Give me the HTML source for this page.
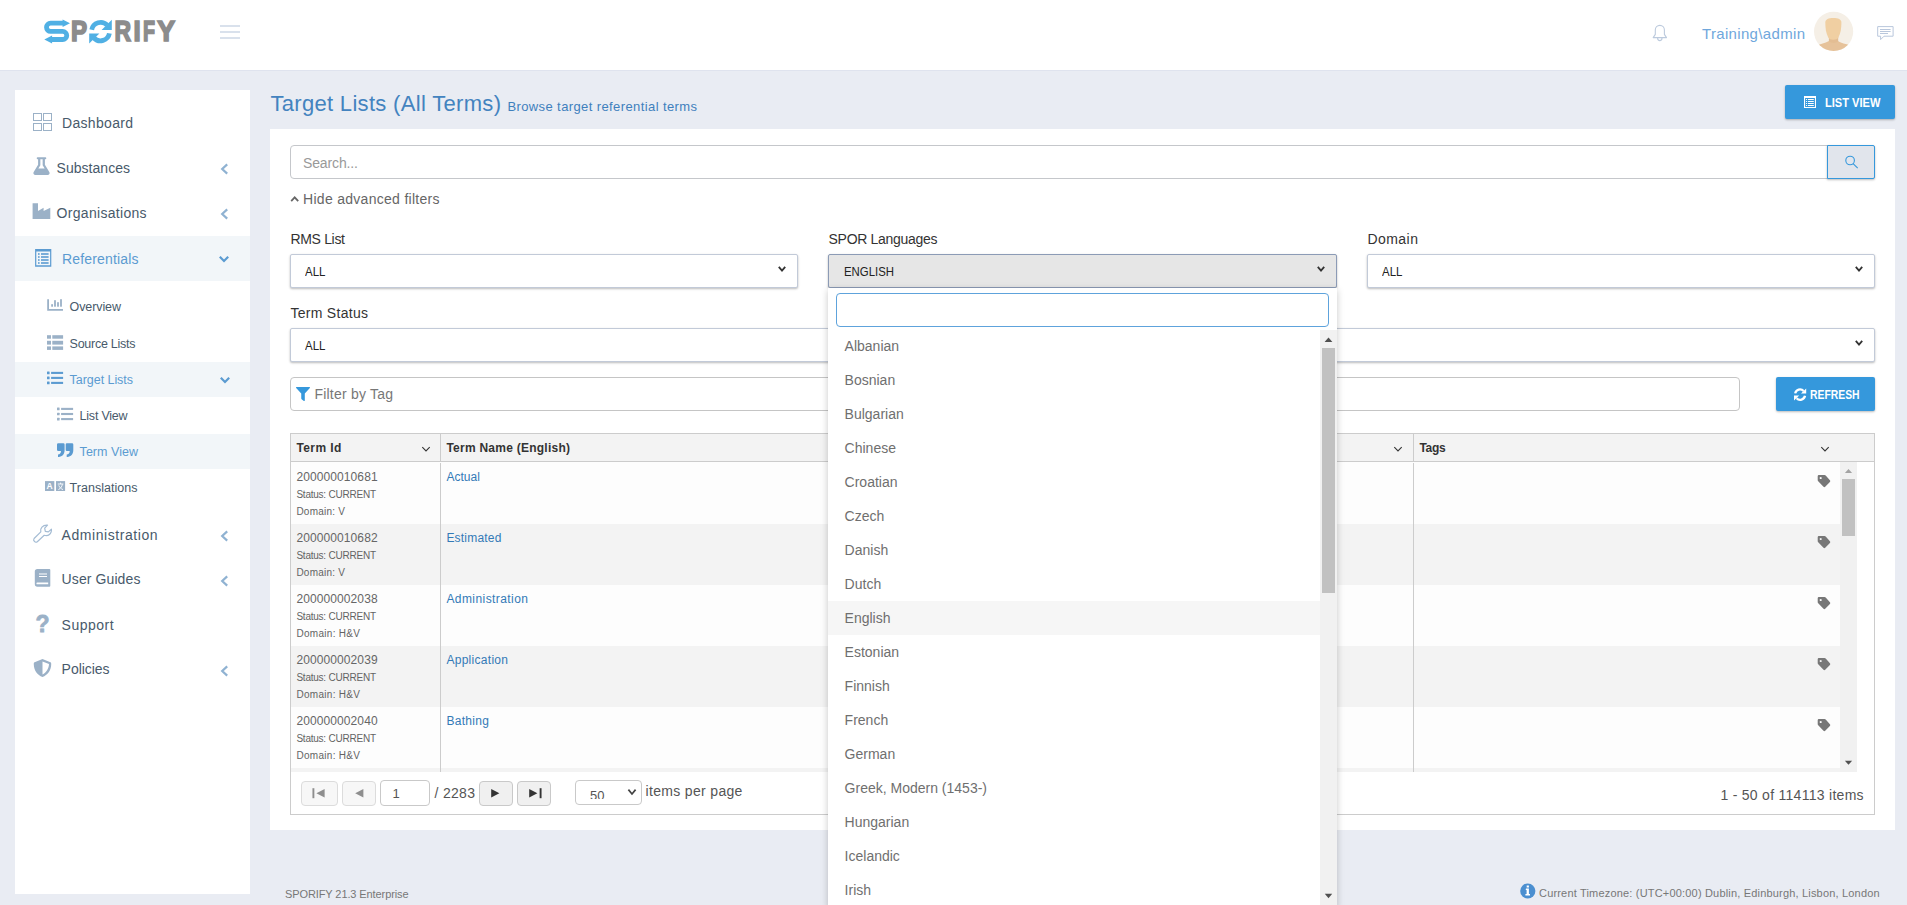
<!DOCTYPE html>
<html lang="en"><head><meta charset="utf-8"><title>SPORIFY - Target Lists (All Terms)</title>
<style>
html,body{margin:0;padding:0}
body{width:1907px;height:905px;overflow:hidden;position:relative;background:#e9ecf3;font-family:"Liberation Sans",sans-serif;}
.t{position:absolute;white-space:pre;line-height:1;font-family:"Liberation Sans",sans-serif;}
div{box-sizing:border-box}
</style></head><body>
<div style="position:absolute;left:0px;top:0px;width:1907px;height:70px;background:#fff;"></div>
<div style="position:absolute;left:0px;top:70px;width:1907px;height:1px;background:#dfe3ee;"></div>
<svg style="position:absolute;left:40px;top:14px;overflow:visible" width="140" height="36" viewBox="40 14 140 36" >
<g fill="none" stroke="#50b0e4" stroke-width="4.8" stroke-linejoin="round">
<path d="M63.2,23.2 H50.6 A4.1,4.1 0 0 0 50.6,31.4 H62.7 A4.05,4.05 0 0 1 62.7,39.5 H51.5"/>
</g>
<path fill="#50b0e4" d="M62.6,19.4 L70,23.2 L62.6,27 Z M52.1,35.6 L44.3,39.5 L52.1,43.6 Z"/>
<g fill="none" stroke="#50b0e4" stroke-width="4.8">
<path d="M91.7,29.8 A9.1,9.1 0 0 1 107.2,25.2"/>
<path d="M109.4,33.4 A9.1,9.1 0 0 1 93.9,38.0"/>
</g>
<path fill="#50b0e4" d="M111.8,19.8 V30 H101.6 Z M89.2,43.6 V33.4 H99.4 Z"/>
</svg>
<svg style="position:absolute;left:40px;top:14px;overflow:visible" width="140" height="36" viewBox="40 14 140 36" ><title>SPORIFY</title><text transform="translate(70.99,41.05) scale(0.8294,1)" font-family="Liberation Sans" font-weight="700" font-size="29.13" fill="#8c8c8c" stroke="#8c8c8c" stroke-width="1.7" stroke-linejoin="miter">P</text><text transform="translate(114.54,41.05) scale(0.7892,1)" font-family="Liberation Sans" font-weight="700" font-size="29.13" fill="#8c8c8c" stroke="#8c8c8c" stroke-width="1.7" stroke-linejoin="miter">R</text><text transform="translate(133.53,41.05) scale(0.8851,1)" font-family="Liberation Sans" font-weight="700" font-size="29.13" fill="#8c8c8c" stroke="#8c8c8c" stroke-width="1.7" stroke-linejoin="miter">I</text><text transform="translate(142.96,41.05) scale(0.6745,1)" font-family="Liberation Sans" font-weight="700" font-size="29.13" fill="#8c8c8c" stroke="#8c8c8c" stroke-width="1.7" stroke-linejoin="miter">F</text><text transform="translate(157.33,41.05) scale(0.9183,1)" font-family="Liberation Sans" font-weight="700" font-size="29.13" fill="#8c8c8c" stroke="#8c8c8c" stroke-width="1.7" stroke-linejoin="miter">Y</text></svg>
<svg style="position:absolute;left:220px;top:24px;overflow:visible" width="20" height="16" viewBox="220 24 20 16" ><path d="M220,26 H240 M220,32 H240 M220,38 H240" stroke="#cdd8e6" stroke-width="1.5" fill="none"/></svg>
<svg style="position:absolute;left:1650px;top:24px;overflow:visible" width="20" height="18" viewBox="1650 24 20 18" ><g fill="none" stroke="#bccadd" stroke-width="1.1" stroke-linejoin="round"><path d="M1653.2,37.6 H1666.5 L1664.4,34.4 V30 a4.55,4.6 0 0 0 -9.1,0 V34.4 Z"/><path d="M1657.6,38 a2.2,2.6 0 0 0 4.4,0"/></g></svg>
<span class="t" style="left:1702px;top:26px;font-size:15px;color:#6fa7dc;letter-spacing:0.333px;">Training\admin</span>
<svg style="position:absolute;left:1814px;top:11px;overflow:visible" width="40" height="41" viewBox="1814 11 40 41" ><defs><clipPath id="avc"><circle cx="1833.6" cy="31.4" r="19.6"/></clipPath></defs>
<circle cx="1833.6" cy="31.4" r="19.6" fill="#f5efe6"/>
<g clip-path="url(#avc)">
<path d="M1813,52 V46.5 C1818,44.6 1825,43.6 1829,41 L1838,41 C1842,43.6 1849,44.6 1854,46.5 V52 Z" fill="#e6c29a"/>
<path d="M1828.9,36.5 V41.6 C1831,43.4 1836,43.4 1838.2,41.6 V36.5 Z" fill="#e3bd93"/>
<path d="M1825.3,22.5 C1825.3,19.2 1828.5,18 1833.3,18 C1838.2,18 1841.4,19.2 1841.4,22.5 C1841.4,28 1840.8,33 1838.4,37.6 C1836.8,40.6 1829.9,40.6 1828.3,37.6 C1825.9,33 1825.3,28 1825.3,22.5 Z" fill="#f0cfa2"/>
</g></svg>
<svg style="position:absolute;left:1877px;top:26px;overflow:visible" width="17" height="14" viewBox="1877 26 17 14" ><g fill="none" stroke="#b9c7dc" stroke-width="1"><path d="M1877.7,26.6 H1893.1 V36.2 H1884 L1880.6,39.6 V36.2 H1877.7 Z"/><path d="M1880,29.5 H1890.6 M1880,31.5 H1890.6 M1880,33.5 H1888"/></g></svg>
<div style="position:absolute;left:15px;top:90px;width:235px;height:804px;background:#fff;"></div>
<div style="position:absolute;left:15px;top:236px;width:235px;height:45px;background:#f2f6f9;"></div>
<div style="position:absolute;left:15px;top:362px;width:235px;height:35px;background:#f2f6f9;"></div>
<div style="position:absolute;left:15px;top:434px;width:235px;height:35px;background:#f2f6f9;"></div>
<svg style="position:absolute;left:33px;top:113px;overflow:visible" width="19" height="18" viewBox="33 113 19 18" ><g fill="none" stroke="#9bb1c7" stroke-width="1"><rect x="33.5" y="113.5" width="8" height="7"/><rect x="43.5" y="113.5" width="8" height="7"/><rect x="33.5" y="123.5" width="8" height="7"/><rect x="43.5" y="123.5" width="8" height="7"/></g></svg>
<span class="t" style="left:62px;top:116px;font-size:14px;color:#485a6b;letter-spacing:0.312px;">Dashboard</span>
<svg style="position:absolute;left:33px;top:157px;overflow:visible" width="17" height="18" viewBox="33 157 17 18" ><path fill-rule="evenodd" fill="#9bb1c7" d="M37.7,157.2 h7.6 a1,1 0 0 1 0,2 h-0.4 v5.6 l4.4,7.2 a2,2 0 0 1 -1.7,3.1 h-12.2 a2,2 0 0 1 -1.7,-3.1 l4.4,-7.2 v-5.6 h-0.4 a1,1 0 0 1 0,-2 z M40.35,159.2 h2.3 v6.1 l2.0,3.2 h-6.3 l2.0,-3.2 z"/></svg>
<span class="t" style="left:56.6px;top:160.6px;font-size:14px;color:#485a6b;letter-spacing:0.025px;">Substances</span>
<svg style="position:absolute;left:32px;top:203px;overflow:visible" width="19" height="16" viewBox="32 203 19 16" ><path fill="#9bb1c7" d="M32.6,203.2 H38 V211 L43.6,207.8 V211 L50.3,207.8 V218.9 H32.6 Z"/></svg>
<span class="t" style="left:56.6px;top:205.6px;font-size:14px;color:#485a6b;letter-spacing:0.301px;">Organisations</span>
<svg style="position:absolute;left:35px;top:249px;overflow:visible" width="17" height="18" viewBox="35 249 17 18" ><path fill-rule="evenodd" fill="#5b9bd1" d="M35.1,249.1 H51.3 V266.8 H35.1 Z M36.3,251.6 V265.2 H50.1 V251.6 Z"/><rect x="38" y="253.2" width="1.6" height="1.6" fill="#5b9bd1"/><rect x="41" y="253.2" width="7.6" height="1.6" fill="#5b9bd1"/><rect x="38" y="256.2" width="1.6" height="1.6" fill="#5b9bd1"/><rect x="41" y="256.2" width="7.6" height="1.6" fill="#5b9bd1"/><rect x="38" y="259.2" width="1.6" height="1.6" fill="#5b9bd1"/><rect x="41" y="259.2" width="7.6" height="1.6" fill="#5b9bd1"/><rect x="38" y="262.2" width="1.6" height="1.6" fill="#5b9bd1"/><rect x="41" y="262.2" width="7.6" height="1.6" fill="#5b9bd1"/></svg>
<span class="t" style="left:62px;top:251.6px;font-size:14px;color:#5b9bd1;letter-spacing:0.154px;">Referentials</span>
<svg style="position:absolute;left:220px;top:163px;overflow:visible" width="9" height="12" viewBox="220 163 9 12" ><path d="M227.2,164.4 L222.2,169 L227.2,173.6" fill="none" stroke="#8fb2d2" stroke-width="2.2"/></svg>
<svg style="position:absolute;left:220px;top:208px;overflow:visible" width="9" height="12" viewBox="220 208 9 12" ><path d="M227.2,209.4 L222.2,214 L227.2,218.6" fill="none" stroke="#8fb2d2" stroke-width="2.2"/></svg>
<svg style="position:absolute;left:220px;top:530px;overflow:visible" width="9" height="12" viewBox="220 530 9 12" ><path d="M227.2,531.4 L222.2,536 L227.2,540.6" fill="none" stroke="#8fb2d2" stroke-width="2.2"/></svg>
<svg style="position:absolute;left:220px;top:575px;overflow:visible" width="9" height="12" viewBox="220 575 9 12" ><path d="M227.2,576.4 L222.2,581 L227.2,585.6" fill="none" stroke="#8fb2d2" stroke-width="2.2"/></svg>
<svg style="position:absolute;left:220px;top:665px;overflow:visible" width="9" height="12" viewBox="220 665 9 12" ><path d="M227.2,666.4 L222.2,671 L227.2,675.6" fill="none" stroke="#8fb2d2" stroke-width="2.2"/></svg>
<svg style="position:absolute;left:218px;top:255px;overflow:visible" width="12" height="8" viewBox="218 255 12 8" ><path d="M219.8,256.8 L224,261 L228.2,256.8" fill="none" stroke="#5b9bd1" stroke-width="2.2"/></svg>
<svg style="position:absolute;left:219px;top:376px;overflow:visible" width="12" height="8" viewBox="219 376 12 8" ><path d="M220.8,377.8 L225,382 L229.2,377.8" fill="none" stroke="#5b9bd1" stroke-width="2.2"/></svg>
<svg style="position:absolute;left:47px;top:299px;overflow:visible" width="16" height="12" viewBox="47 299 16 12" ><path fill="#9bb1c7" d="M47.2,299.2 h1.8 v9.9 h14 v1.6 h-15.8 Z"/><rect x="51.2" y="304.2" width="1.8" height="2.5" fill="#9bb1c7"/><rect x="54.1" y="300.2" width="1.8" height="6.5" fill="#9bb1c7"/><rect x="57.1" y="302.2" width="1.8" height="4.5" fill="#9bb1c7"/><rect x="60.1" y="299.2" width="1.8" height="7.5" fill="#9bb1c7"/></svg>
<span class="t" style="left:69.6px;top:300.6px;font-size:12.5px;color:#485a6b;letter-spacing:-0.099px;">Overview</span>
<svg style="position:absolute;left:47px;top:335px;overflow:visible" width="17" height="15" viewBox="47 335 17 15" ><rect x="47" y="335.2" width="4" height="3.5" fill="#9bb1c7"/><rect x="52.3" y="335.2" width="10.8" height="3.5" fill="#9bb1c7"/><rect x="47" y="340.8" width="4" height="3.8" fill="#9bb1c7"/><rect x="52.3" y="340.8" width="10.8" height="3.8" fill="#9bb1c7"/><rect x="47" y="346.4" width="4" height="3.5" fill="#9bb1c7"/><rect x="52.3" y="346.4" width="10.8" height="3.5" fill="#9bb1c7"/></svg>
<span class="t" style="left:69.6px;top:338px;font-size:12.5px;color:#485a6b;letter-spacing:-0.271px;">Source Lists</span>
<svg style="position:absolute;left:47px;top:371px;overflow:visible" width="17" height="14" viewBox="47 371 17 14" ><rect x="47" y="371.59999999999997" width="2.6" height="2.6" rx="0.5" fill="#5b9bd1"/><rect x="51.1" y="371.84999999999997" width="12" height="2.1" fill="#5b9bd1"/><rect x="47" y="376.59999999999997" width="2.6" height="2.6" rx="0.5" fill="#5b9bd1"/><rect x="51.1" y="376.84999999999997" width="12" height="2.1" fill="#5b9bd1"/><rect x="47" y="381.59999999999997" width="2.6" height="2.6" rx="0.5" fill="#5b9bd1"/><rect x="51.1" y="381.84999999999997" width="12" height="2.1" fill="#5b9bd1"/></svg>
<span class="t" style="left:69.6px;top:374px;font-size:12.5px;color:#5b9bd1;letter-spacing:-0.047px;">Target Lists</span>
<svg style="position:absolute;left:57px;top:407px;overflow:visible" width="17" height="14" viewBox="57 407 17 14" ><rect x="57" y="407.59999999999997" width="2.6" height="2.6" rx="0.5" fill="#9bb1c7"/><rect x="61.1" y="407.84999999999997" width="12" height="2.1" fill="#9bb1c7"/><rect x="57" y="412.7" width="2.6" height="2.6" rx="0.5" fill="#9bb1c7"/><rect x="61.1" y="412.95" width="12" height="2.1" fill="#9bb1c7"/><rect x="57" y="417.8" width="2.6" height="2.6" rx="0.5" fill="#9bb1c7"/><rect x="61.1" y="418.05" width="12" height="2.1" fill="#9bb1c7"/></svg>
<span class="t" style="left:79.6px;top:410px;font-size:12.5px;color:#485a6b;letter-spacing:-0.225px;">List View</span>
<svg style="position:absolute;left:57px;top:443px;overflow:visible" width="17" height="14" viewBox="57 443 17 14" ><path fill="#5b9bd1" d="M58.2,443.2 h5.2 a1.2,1.2 0 0 1 1.2,1.2 v5.6 c0,4.2 -2.2,6.6 -6,7 h-0.6 v-2.4 c1.8,-0.2 3,-1.4 3,-3.6 h-2.8 a1.2,1.2 0 0 1 -1.2,-1.2 v-5.4 a1.2,1.2 0 0 1 1.2,-1.2 z"/><path fill="#5b9bd1" d="M66.9,443.2 h5.2 a1.2,1.2 0 0 1 1.2,1.2 v5.6 c0,4.2 -2.2,6.6 -6,7 h-0.6 v-2.4 c1.8,-0.2 3,-1.4 3,-3.6 h-2.8 a1.2,1.2 0 0 1 -1.2,-1.2 v-5.4 a1.2,1.2 0 0 1 1.2,-1.2 z"/></svg>
<span class="t" style="left:79.6px;top:445.6px;font-size:12.5px;color:#5b9bd1;letter-spacing:0.034px;">Term View</span>
<svg style="position:absolute;left:45px;top:481px;overflow:visible" width="21" height="10" viewBox="45 481 21 10" ><rect x="45" y="481.1" width="9.3" height="9.9" fill="#9bb1c7"/><rect x="56" y="481.1" width="9.1" height="9.9" fill="#9bb1c7"/><text x="49.65" y="489.3" text-anchor="middle" font-family="Liberation Sans" font-weight="700" font-size="8.5" fill="#fff">A</text><path d="M57.8,484 h5.6 M60.6,482.6 v1.4 M58.4,489.6 C60.6,488.6 62,486.6 62.4,484.2 M58.8,485.4 C59.6,487.4 61,488.8 63,489.6" fill="none" stroke="#fff" stroke-width="0.9"/></svg>
<span class="t" style="left:69.6px;top:482px;font-size:12.5px;color:#485a6b;letter-spacing:0.034px;">Translations</span>
<svg style="position:absolute;left:33px;top:524px;overflow:visible" width="20" height="20" viewBox="33 524 20 20" ><path d="M37.3,541.7 a2.3,2.3 0 0 1 -3.2,-3.2 L40.8,531.8 C39.8,528.4 42.6,524.8 47.5,525.2 L44.7,528.2 L45.3,531.3 L48.4,531.9 L51.4,529.1 C51.9,533.8 48.2,536.6 44.2,535.3 Z" fill="none" stroke="#a4bcd4" stroke-width="1.2" stroke-linejoin="round"/></svg>
<span class="t" style="left:61.6px;top:527.6px;font-size:14px;color:#485a6b;letter-spacing:0.561px;">Administration</span>
<svg style="position:absolute;left:34px;top:569px;overflow:visible" width="17" height="18" viewBox="34 569 17 18" ><path fill-rule="evenodd" fill="#9bb1c7" d="M37.4,569 H49.4 a0.9,0.9 0 0 1 0.9,0.9 V585.8 a0.9,0.9 0 0 1 -0.9,0.9 H37.4 a2.6,2.6 0 0 1 -2.6,-2.6 V571.6 a2.6,2.6 0 0 1 2.6,-2.6 z M39,573.6 v1 h8 v-1 z M39,576 v1 h8 v-1 z M37.3,582.5 a0.9,0.9 0 0 0 0,1.8 h10.9 v-1.8 z"/></svg>
<span class="t" style="left:61.6px;top:572.4px;font-size:14px;color:#485a6b;letter-spacing:0.099px;">User Guides</span>
<span class="t" style="left:35.4px;top:612.6px;font-size:23px;color:#9bb1c7;font-weight:700;-webkit-text-stroke:0.8px #9bb1c7;">?</span>
<span class="t" style="left:61.6px;top:617.6px;font-size:14px;color:#485a6b;letter-spacing:0.492px;">Support</span>
<svg style="position:absolute;left:33px;top:659px;overflow:visible" width="19" height="19" viewBox="33 659 19 19" ><path fill-rule="evenodd" fill="#9bb1c7" d="M42.5,659 L50.4,662.2 C51.3,662.6 51.2,663.4 51.2,664.4 C51.2,670 47.6,675 42.5,677.1 C37.4,675 33.8,670 33.8,664.4 C33.8,663.4 33.7,662.6 34.6,662.2 Z M42.5,661.4 V674.6 C46.2,672.7 48.9,668.6 49,664.1 Z"/></svg>
<span class="t" style="left:61.6px;top:662.4px;font-size:14px;color:#485a6b;letter-spacing:-0.036px;">Policies</span>
<span class="t" style="left:270.4px;top:93px;font-size:22px;color:#4383bf;letter-spacing:0.317px;">Target Lists (All Terms)</span>
<span class="t" style="left:507.4px;top:100px;font-size:13px;color:#3f80bd;letter-spacing:0.396px;">Browse target referential terms</span>
<div style="position:absolute;left:1785px;top:85px;width:110px;height:34px;background:#3598dc;border-radius:2px;box-shadow:0 1px 3px rgba(0,0,0,.1),0 1px 2px rgba(0,0,0,.18);"></div>
<svg style="position:absolute;left:1804px;top:96px;overflow:visible" width="12" height="12" viewBox="1804 96 12 12" ><path fill-rule="evenodd" fill="#fff" d="M1804,96 H1816 V108 H1804 Z M1805.1,98 V106.9 H1814.9 V98 Z"/><rect x="1806" y="99.0" width="1.1" height="1" fill="#fff"/><rect x="1808" y="99.0" width="5.8" height="1" fill="#fff"/><rect x="1806" y="101.0" width="1.1" height="1" fill="#fff"/><rect x="1808" y="101.0" width="5.8" height="1" fill="#fff"/><rect x="1806" y="103.0" width="1.1" height="1" fill="#fff"/><rect x="1808" y="103.0" width="5.8" height="1" fill="#fff"/><rect x="1806" y="105.0" width="1.1" height="1" fill="#fff"/><rect x="1808" y="105.0" width="5.8" height="1" fill="#fff"/></svg>
<span class="t" style="left:1824.6px;top:96.2px;font-size:13px;color:#fff;font-weight:700;transform:scaleX(0.8523);transform-origin:0 0;">LIST VIEW</span>
<div style="position:absolute;left:270px;top:129px;width:1625px;height:701px;background:#fff;"></div>
<div style="position:absolute;left:290px;top:145px;width:1538px;height:34px;background:#fff;border:1px solid #c5c7cb;border-radius:4px 0 0 4px;"></div>
<span class="t" style="left:303px;top:156px;font-size:14px;color:#999;letter-spacing:-0.129px;">Search...</span>
<div style="position:absolute;left:1827px;top:145px;width:48px;height:34px;background:#e1e5ec;border:1px solid #3598dc;border-radius:0 2px 2px 0;box-shadow:0 1px 3px rgba(0,0,0,.1),0 1px 2px rgba(0,0,0,.18);"></div>
<svg style="position:absolute;left:1845px;top:156px;overflow:visible" width="14" height="13" viewBox="1845 156 14 13" ><g fill="none" stroke="#3598dc" stroke-width="1.1"><circle cx="1850.1" cy="160.5" r="4.3"/><path d="M1853.1,163.7 L1857.7,168.2"/></g></svg>
<svg style="position:absolute;left:290px;top:195px;overflow:visible" width="10" height="8" viewBox="290 195 10 8" ><path d="M291.2,201.2 L294.7,197.4 L298.2,201.2" fill="none" stroke="#666" stroke-width="1.8"/></svg>
<span class="t" style="left:303px;top:192px;font-size:14px;color:#666;letter-spacing:0.292px;">Hide advanced filters</span>
<span class="t" style="left:290.4px;top:232px;font-size:14px;color:#333;letter-spacing:-0.314px;">RMS List</span>
<span class="t" style="left:828.6px;top:232px;font-size:14px;color:#333;letter-spacing:-0.312px;">SPOR Languages</span>
<span class="t" style="left:1367.4px;top:232px;font-size:14px;color:#333;letter-spacing:0.470px;">Domain</span>
<span class="t" style="left:290.4px;top:306px;font-size:14px;color:#333;letter-spacing:0.290px;">Term Status</span>
<div style="position:absolute;left:290px;top:254px;width:508px;height:34px;background:#fff;border:1px solid #c2cad8;border-radius:2px;box-shadow:0 1px 3px rgba(0,0,0,.1),0 1px 2px rgba(0,0,0,.18);"></div>
<svg style="position:absolute;left:777.2px;top:265.4px;overflow:visible" width="10" height="8" viewBox="777.2 265.4 10 8" ><path d="M779.0,267.29999999999995 L782.2,271.1 L785.4000000000001,267.29999999999995" fill="none" stroke="#333" stroke-width="1.8"/></svg>
<div style="position:absolute;left:828px;top:254px;width:509px;height:34px;background:#e6e6e6;border:1px solid #8c9bb6;border-radius:2px;box-shadow:0 1px 3px rgba(0,0,0,.1),0 1px 2px rgba(0,0,0,.18);"></div>
<svg style="position:absolute;left:1316.2px;top:265.4px;overflow:visible" width="10" height="8" viewBox="1316.2 265.4 10 8" ><path d="M1318.0,267.29999999999995 L1321.2,271.1 L1324.4,267.29999999999995" fill="none" stroke="#333" stroke-width="1.8"/></svg>
<div style="position:absolute;left:1367px;top:254px;width:508px;height:34px;background:#fff;border:1px solid #c2cad8;border-radius:2px;box-shadow:0 1px 3px rgba(0,0,0,.1),0 1px 2px rgba(0,0,0,.18);"></div>
<svg style="position:absolute;left:1854.2px;top:265.4px;overflow:visible" width="10" height="8" viewBox="1854.2 265.4 10 8" ><path d="M1856.0,267.29999999999995 L1859.2,271.1 L1862.4,267.29999999999995" fill="none" stroke="#333" stroke-width="1.8"/></svg>
<div style="position:absolute;left:290px;top:328px;width:1585px;height:34px;background:#fff;border:1px solid #c2cad8;border-radius:2px;box-shadow:0 1px 3px rgba(0,0,0,.1),0 1px 2px rgba(0,0,0,.18);"></div>
<svg style="position:absolute;left:1854.2px;top:339.4px;overflow:visible" width="10" height="8" viewBox="1854.2 339.4 10 8" ><path d="M1856.0,341.29999999999995 L1859.2,345.1 L1862.4,341.29999999999995" fill="none" stroke="#333" stroke-width="1.8"/></svg>
<span class="t" style="left:305px;top:265px;font-size:13px;color:#222;transform:scaleX(0.8816);transform-origin:0 0;">ALL</span>
<span class="t" style="left:843.6px;top:265px;font-size:13px;color:#222;transform:scaleX(0.8760);transform-origin:0 0;">ENGLISH</span>
<span class="t" style="left:1381.6px;top:265px;font-size:13px;color:#222;transform:scaleX(0.8816);transform-origin:0 0;">ALL</span>
<span class="t" style="left:305px;top:339px;font-size:13px;color:#222;transform:scaleX(0.8816);transform-origin:0 0;">ALL</span>
<div style="position:absolute;left:290px;top:377px;width:1450px;height:34px;background:#fff;border:1px solid #c5c5c5;border-radius:4px;"></div>
<svg style="position:absolute;left:296px;top:387px;overflow:visible" width="14" height="14" viewBox="296 387 14 14" ><path fill="#3598dc" d="M296.6,387 H309.4 a0.6,0.6 0 0 1 0.45,1 L304.8,393.6 V400.4 a0.6,0.6 0 0 1 -0.95,0.5 L301.6,399.2 a0.8,0.8 0 0 1 -0.35,-0.65 V393.6 L296.15,388 a0.6,0.6 0 0 1 0.45,-1 z"/></svg>
<span class="t" style="left:314.4px;top:387px;font-size:14px;color:#777;letter-spacing:0.217px;">Filter by Tag</span>
<div style="position:absolute;left:1776px;top:377px;width:99px;height:34px;background:#3598dc;border-radius:2px;box-shadow:0 1px 3px rgba(0,0,0,.1),0 1px 2px rgba(0,0,0,.18);"></div>
<svg style="position:absolute;left:1794px;top:388px;overflow:visible" width="13" height="13" viewBox="1794 388 13 13" ><g fill="none" stroke="#fff" stroke-width="2.3"><path d="M1795.2,393.4 A4.9,4.9 0 0 1 1803.6,391"/><path d="M1805,395.8 A4.9,4.9 0 0 1 1796.6,398.2"/></g>
<path fill="#fff" d="M1806.2,388.4 V393.6 H1801 Z M1794,400.6 V395.6 H1799.2 Z"/></svg>
<span class="t" style="left:1809.8px;top:389.2px;font-size:12.5px;color:#fff;font-weight:700;transform:scaleX(0.8303);transform-origin:0 0;">REFRESH</span>
<div style="position:absolute;left:290px;top:433px;width:1585px;height:382px;background:#fff;border:1px solid #ccc;"></div>
<div style="position:absolute;left:291px;top:434px;width:1583px;height:27px;background:#f3f3f3;"></div>
<div style="position:absolute;left:291px;top:461px;width:1583px;height:1px;background:#ccc;"></div>
<div style="position:absolute;left:440px;top:434px;width:1px;height:28px;background:#ccc;"></div>
<div style="position:absolute;left:1413px;top:434px;width:1px;height:28px;background:#ccc;"></div>
<span class="t" style="left:296.4px;top:442px;font-size:12px;color:#333;font-weight:700;letter-spacing:0.424px;">Term Id</span>
<span class="t" style="left:446.4px;top:442px;font-size:12px;color:#333;font-weight:700;letter-spacing:0.248px;">Term Name (English)</span>
<span class="t" style="left:1419.4px;top:442px;font-size:12px;color:#333;font-weight:700;letter-spacing:-0.308px;">Tags</span>
<svg style="position:absolute;left:420.5px;top:444.6px;overflow:visible" width="10" height="8" viewBox="420.5 444.6 10 8" ><path d="M421.8,446.70000000000005 L425.5,450.5 L429.2,446.70000000000005" fill="none" stroke="#333" stroke-width="1.1"/></svg>
<svg style="position:absolute;left:1393.4px;top:444.6px;overflow:visible" width="10" height="8" viewBox="1393.4 444.6 10 8" ><path d="M1394.7,446.70000000000005 L1398.4,450.5 L1402.1000000000001,446.70000000000005" fill="none" stroke="#333" stroke-width="1.1"/></svg>
<svg style="position:absolute;left:1820.4px;top:444.6px;overflow:visible" width="10" height="8" viewBox="1820.4 444.6 10 8" ><path d="M1821.7,446.70000000000005 L1825.4,450.5 L1829.1000000000001,446.70000000000005" fill="none" stroke="#333" stroke-width="1.1"/></svg>
<div style="position:absolute;left:291px;top:462px;width:1549px;height:62px;background:#fdfdfd;"></div>
<span class="t" style="left:296.4px;top:471px;font-size:12px;color:#666;letter-spacing:0.101px;">200000010681</span>
<span class="t" style="left:296.4px;top:490px;font-size:10px;color:#636363;letter-spacing:-0.228px;">Status: CURRENT</span>
<span class="t" style="left:296.4px;top:507px;font-size:10px;color:#636363;letter-spacing:0.239px;">Domain: V</span>
<span class="t" style="left:446.4px;top:471px;font-size:12px;color:#337ab7;letter-spacing:0.048px;">Actual</span>
<svg style="position:absolute;left:1817px;top:475px;overflow:visible" width="14" height="13" viewBox="1817 475 14 13" ><path fill-rule="evenodd" fill="#777" d="M1818.9,475 H1824.6 a1.6,1.6 0 0 1 1.1,0.45 L1829.9,480.2 a1.2,1.2 0 0 1 0,1.7 L1825.2,486.7 a1.2,1.2 0 0 1 -1.7,0 L1818.2,481.3 a1.6,1.6 0 0 1 -0.5,-1.1 V476.2 a1.2,1.2 0 0 1 1.2,-1.2 z M1820.7,476.9 a1.1,1.1 0 1 0 0.01,0 z"/></svg>
<div style="position:absolute;left:291px;top:524px;width:1549px;height:61px;background:#f3f3f3;"></div>
<span class="t" style="left:296.4px;top:532px;font-size:12px;color:#666;letter-spacing:0.101px;">200000010682</span>
<span class="t" style="left:296.4px;top:551px;font-size:10px;color:#636363;letter-spacing:-0.228px;">Status: CURRENT</span>
<span class="t" style="left:296.4px;top:568px;font-size:10px;color:#636363;letter-spacing:0.239px;">Domain: V</span>
<span class="t" style="left:446.4px;top:532px;font-size:12px;color:#337ab7;letter-spacing:0.205px;">Estimated</span>
<svg style="position:absolute;left:1817px;top:536px;overflow:visible" width="14" height="13" viewBox="1817 536 14 13" ><path fill-rule="evenodd" fill="#777" d="M1818.9,536 H1824.6 a1.6,1.6 0 0 1 1.1,0.45 L1829.9,541.2 a1.2,1.2 0 0 1 0,1.7 L1825.2,547.7 a1.2,1.2 0 0 1 -1.7,0 L1818.2,542.3 a1.6,1.6 0 0 1 -0.5,-1.1 V537.2 a1.2,1.2 0 0 1 1.2,-1.2 z M1820.7,537.9 a1.1,1.1 0 1 0 0.01,0 z"/></svg>
<div style="position:absolute;left:291px;top:585px;width:1549px;height:61px;background:#fdfdfd;"></div>
<span class="t" style="left:296.4px;top:593px;font-size:12px;color:#666;letter-spacing:0.101px;">200000002038</span>
<span class="t" style="left:296.4px;top:612px;font-size:10px;color:#636363;letter-spacing:-0.228px;">Status: CURRENT</span>
<span class="t" style="left:296.4px;top:629px;font-size:10px;color:#636363;letter-spacing:0.302px;">Domain: H&amp;V</span>
<span class="t" style="left:446.4px;top:593px;font-size:12px;color:#337ab7;letter-spacing:0.428px;">Administration</span>
<svg style="position:absolute;left:1817px;top:597px;overflow:visible" width="14" height="13" viewBox="1817 597 14 13" ><path fill-rule="evenodd" fill="#777" d="M1818.9,597 H1824.6 a1.6,1.6 0 0 1 1.1,0.45 L1829.9,602.2 a1.2,1.2 0 0 1 0,1.7 L1825.2,608.7 a1.2,1.2 0 0 1 -1.7,0 L1818.2,603.3 a1.6,1.6 0 0 1 -0.5,-1.1 V598.2 a1.2,1.2 0 0 1 1.2,-1.2 z M1820.7,598.9 a1.1,1.1 0 1 0 0.01,0 z"/></svg>
<div style="position:absolute;left:291px;top:646px;width:1549px;height:61px;background:#f3f3f3;"></div>
<span class="t" style="left:296.4px;top:654px;font-size:12px;color:#666;letter-spacing:0.101px;">200000002039</span>
<span class="t" style="left:296.4px;top:673px;font-size:10px;color:#636363;letter-spacing:-0.228px;">Status: CURRENT</span>
<span class="t" style="left:296.4px;top:690px;font-size:10px;color:#636363;letter-spacing:0.302px;">Domain: H&amp;V</span>
<span class="t" style="left:446.4px;top:654px;font-size:12px;color:#337ab7;letter-spacing:0.288px;">Application</span>
<svg style="position:absolute;left:1817px;top:658px;overflow:visible" width="14" height="13" viewBox="1817 658 14 13" ><path fill-rule="evenodd" fill="#777" d="M1818.9,658 H1824.6 a1.6,1.6 0 0 1 1.1,0.45 L1829.9,663.2 a1.2,1.2 0 0 1 0,1.7 L1825.2,669.7 a1.2,1.2 0 0 1 -1.7,0 L1818.2,664.3 a1.6,1.6 0 0 1 -0.5,-1.1 V659.2 a1.2,1.2 0 0 1 1.2,-1.2 z M1820.7,659.9 a1.1,1.1 0 1 0 0.01,0 z"/></svg>
<div style="position:absolute;left:291px;top:707px;width:1549px;height:61px;background:#fdfdfd;"></div>
<span class="t" style="left:296.4px;top:715px;font-size:12px;color:#666;letter-spacing:0.101px;">200000002040</span>
<span class="t" style="left:296.4px;top:734px;font-size:10px;color:#636363;letter-spacing:-0.228px;">Status: CURRENT</span>
<span class="t" style="left:296.4px;top:751px;font-size:10px;color:#636363;letter-spacing:0.302px;">Domain: H&amp;V</span>
<span class="t" style="left:446.4px;top:715px;font-size:12px;color:#337ab7;letter-spacing:0.316px;">Bathing</span>
<svg style="position:absolute;left:1817px;top:719px;overflow:visible" width="14" height="13" viewBox="1817 719 14 13" ><path fill-rule="evenodd" fill="#777" d="M1818.9,719 H1824.6 a1.6,1.6 0 0 1 1.1,0.45 L1829.9,724.2 a1.2,1.2 0 0 1 0,1.7 L1825.2,730.7 a1.2,1.2 0 0 1 -1.7,0 L1818.2,725.3 a1.6,1.6 0 0 1 -0.5,-1.1 V720.2 a1.2,1.2 0 0 1 1.2,-1.2 z M1820.7,720.9 a1.1,1.1 0 1 0 0.01,0 z"/></svg>
<div style="position:absolute;left:291px;top:768px;width:1549px;height:4px;background:#f3f3f3;"></div>
<div style="position:absolute;left:440px;top:463px;width:1px;height:309px;background:#ccc;"></div>
<div style="position:absolute;left:1413px;top:463px;width:1px;height:309px;background:#ccc;"></div>
<div style="position:absolute;left:1840px;top:462px;width:17px;height:310px;background:#f1f1f1;"></div>
<div style="position:absolute;left:1842px;top:479px;width:13px;height:57px;background:#c1c1c1;"></div>
<svg style="position:absolute;left:1844px;top:468px;overflow:visible" width="9" height="5" viewBox="1844 468 9 5" ><path d="M1844.9,472.9 L1848.5,468.9 L1852.1,472.9 Z" fill="#a3a3a3"/></svg>
<svg style="position:absolute;left:1844px;top:760px;overflow:visible" width="9" height="5" viewBox="1844 760 9 5" ><path d="M1844.9,760.8 L1848.5,764.8 L1852.1,760.8 Z" fill="#505050"/></svg>
<div style="position:absolute;left:301px;top:781px;width:37px;height:25px;background:#f7f7f7;border:1px solid #dcdcdc;border-radius:4px;"></div>
<div style="position:absolute;left:342px;top:781px;width:34px;height:25px;background:#f7f7f7;border:1px solid #dcdcdc;border-radius:4px;"></div>
<div style="position:absolute;left:479px;top:781px;width:34px;height:25px;background:#f0f0f0;border:1px solid #c9c9c9;border-radius:4px;"></div>
<div style="position:absolute;left:517px;top:781px;width:34px;height:25px;background:#f0f0f0;border:1px solid #c9c9c9;border-radius:4px;"></div>
<svg style="position:absolute;left:312px;top:788px;overflow:visible" width="14" height="11" viewBox="312 788 14 11" ><path d="M313.4,788.2 V798.2" stroke="#8e8e8e" stroke-width="1.9" fill="none"/><path d="M324.6,788.9 V797.5 L316.4,793.2 Z" fill="#8e8e8e"/></svg>
<svg style="position:absolute;left:354px;top:788px;overflow:visible" width="10" height="11" viewBox="354 788 10 11" ><path d="M363.4,788.9 V797.5 L355.2,793.2 Z" fill="#8e8e8e"/></svg>
<svg style="position:absolute;left:490px;top:788px;overflow:visible" width="10" height="11" viewBox="490 788 10 11" ><path d="M491.2,788.9 V797.5 L499.4,793.2 Z" fill="#333"/></svg>
<svg style="position:absolute;left:528px;top:788px;overflow:visible" width="14" height="11" viewBox="528 788 14 11" ><path d="M529.2,788.9 V797.5 L537.4,793.2 Z" fill="#333"/><path d="M540.6,788.2 V798.2" stroke="#333" stroke-width="1.9" fill="none"/></svg>
<div style="position:absolute;left:380px;top:780px;width:50px;height:26px;background:#fff;border:1px solid #c9c9c9;border-radius:4px;"></div>
<span class="t" style="left:392.4px;top:787px;font-size:13px;color:#555;">1</span>
<span class="t" style="left:434.6px;top:786px;font-size:14px;color:#555;letter-spacing:0.292px;">/ 2283</span>
<div style="position:absolute;left:575px;top:780px;width:67px;height:25px;background:#fff;border:1px solid #c9c9c9;border-radius:4px;overflow:hidden;"><div style="position:absolute;left:0;top:0;width:50px;height:17.6px;overflow:hidden"><span class="t" style="left:14px;top:8.4px;font-size:13px;color:#555">50</span></div></div>
<svg style="position:absolute;left:627.2px;top:788.2px;overflow:visible" width="10" height="8" viewBox="627.2 788.2 10 8" ><path d="M628.6,789.8000000000001 L632.2,794.2 L635.8000000000001,789.8000000000001" fill="none" stroke="#444" stroke-width="1.7"/></svg>
<span class="t" style="left:645.6px;top:783.6px;font-size:14px;color:#555;letter-spacing:0.322px;">items per page</span>
<span class="t" style="left:1720.4px;top:788px;font-size:14px;color:#555;letter-spacing:0.284px;">1 - 50 of 114113 items</span>
<span class="t" style="left:285px;top:889px;font-size:11px;color:#777;letter-spacing:-0.098px;">SPORIFY 21.3 Enterprise</span>
<svg style="position:absolute;left:1520px;top:883px;overflow:visible" width="16" height="16" viewBox="1520 883 16 16" ><circle cx="1527.8" cy="891" r="7.6" fill="#4b8fd0"/><path d="M1526,888.6 h2.9 v5.4 h1.1 v1.4 h-4.6 v-1.4 h1.2 v-4 h-0.9 z M1526.7,885.6 h2.2 v2 h-2.2 z" fill="#fff"/></svg>
<span class="t" style="left:1539px;top:888px;font-size:11px;color:#777;letter-spacing:0.183px;">Current Timezone: (UTC+00:00) Dublin, Edinburgh, Lisbon, London</span>
<div style="position:absolute;left:828px;top:288px;width:509px;height:620px;background:#fff;box-shadow:0 2px 7px rgba(0,0,0,.22);"></div>
<div style="position:absolute;left:836px;top:293px;width:493px;height:34px;background:#fff;border:1px solid #5ea3dc;border-radius:4px;"></div>
<div style="position:absolute;left:1320px;top:330px;width:17px;height:575px;background:#f1f1f1;"></div>
<div style="position:absolute;left:1322px;top:348px;width:13px;height:245px;background:#c1c1c1;"></div>
<svg style="position:absolute;left:1324px;top:337px;overflow:visible" width="9" height="5" viewBox="1324 337 9 5" ><path d="M1324.6,342 L1328.5,337.6 L1332.4,342 Z" fill="#505050"/></svg>
<svg style="position:absolute;left:1324px;top:893px;overflow:visible" width="9" height="6" viewBox="1324 893 9 6" ><path d="M1324.8,893.7 L1328.5,898.2 L1332.2,893.7 Z" fill="#505050"/></svg>
<div style="position:absolute;left:828px;top:601px;width:492px;height:34px;background:#f6f6f6;"></div>
<span class="t" style="left:844.6px;top:339px;font-size:14px;color:#6f6f6f;">Albanian</span>
<span class="t" style="left:844.6px;top:373px;font-size:14px;color:#6f6f6f;">Bosnian</span>
<span class="t" style="left:844.6px;top:407px;font-size:14px;color:#6f6f6f;">Bulgarian</span>
<span class="t" style="left:844.6px;top:441px;font-size:14px;color:#6f6f6f;">Chinese</span>
<span class="t" style="left:844.6px;top:475px;font-size:14px;color:#6f6f6f;">Croatian</span>
<span class="t" style="left:844.6px;top:509px;font-size:14px;color:#6f6f6f;">Czech</span>
<span class="t" style="left:844.6px;top:543px;font-size:14px;color:#6f6f6f;">Danish</span>
<span class="t" style="left:844.6px;top:577px;font-size:14px;color:#6f6f6f;">Dutch</span>
<span class="t" style="left:844.6px;top:611px;font-size:14px;color:#6f6f6f;">English</span>
<span class="t" style="left:844.6px;top:645px;font-size:14px;color:#6f6f6f;">Estonian</span>
<span class="t" style="left:844.6px;top:679px;font-size:14px;color:#6f6f6f;">Finnish</span>
<span class="t" style="left:844.6px;top:713px;font-size:14px;color:#6f6f6f;">French</span>
<span class="t" style="left:844.6px;top:747px;font-size:14px;color:#6f6f6f;">German</span>
<span class="t" style="left:844.6px;top:781px;font-size:14px;color:#6f6f6f;">Greek, Modern (1453-)</span>
<span class="t" style="left:844.6px;top:815px;font-size:14px;color:#6f6f6f;">Hungarian</span>
<span class="t" style="left:844.6px;top:849px;font-size:14px;color:#6f6f6f;">Icelandic</span>
<span class="t" style="left:844.6px;top:883px;font-size:14px;color:#6f6f6f;">Irish</span>
</body></html>
